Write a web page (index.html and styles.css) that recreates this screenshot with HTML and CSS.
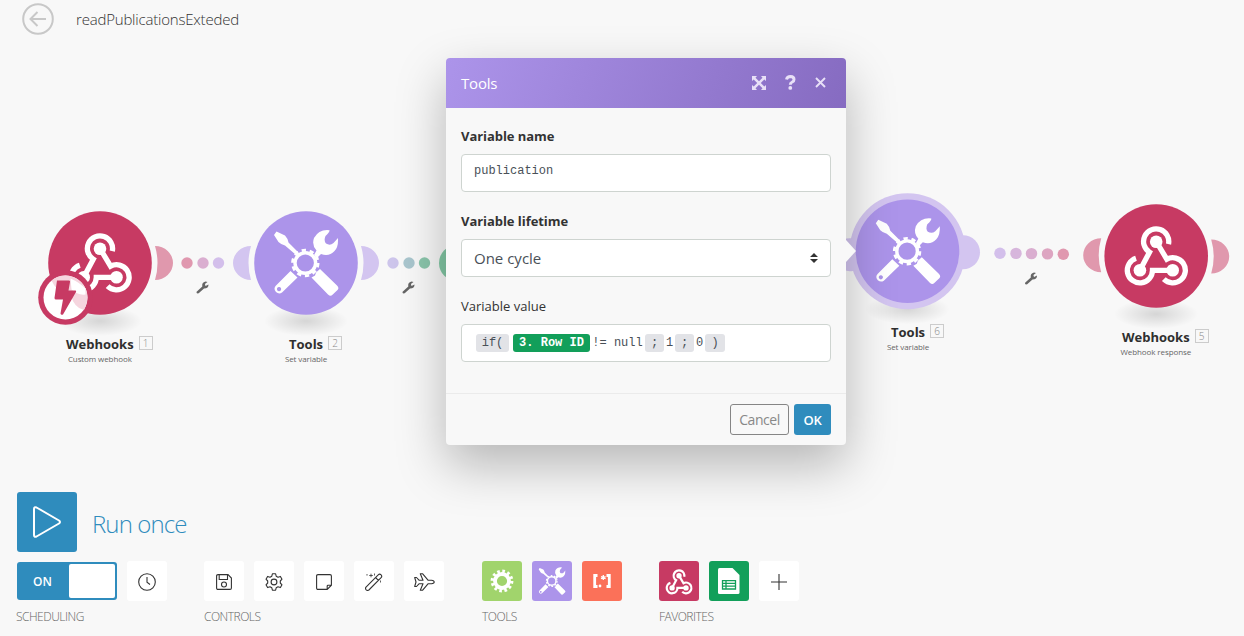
FILE: index.html
```
<!DOCTYPE html>
<html lang="en">
<head>
<meta charset="utf-8">
<title>readPublicationsExteded</title>
<link rel="stylesheet" href="styles.css">
</head>
<body>
<svg class="defs" width="0" height="0">
  <defs>
    <radialGradient id="ground"><stop offset="0" stop-color="#000" stop-opacity=".14"/><stop offset=".5" stop-color="#000" stop-opacity=".07"/><stop offset="1" stop-color="#000" stop-opacity="0"/></radialGradient>
    <g id="webhook">
      <g fill="none" stroke="#fff" stroke-width="5.3">
        <path d="M-16.3 14.3L-6.7-3.8A12.6 12.6 0 1 1 12.3-11.9"/>
        <path d="M0-14.5L10.6 3.2A12.6 12.6 0 1 1 7.6 23.2"/>
        <path d="M16.5 14.3H-3.7A12.6 12.6 0 1 1-20.2 2.3"/>
      </g>
      <g fill="#fff"><circle cy="-14.3" r="6.3"/><circle cx="-16.3" cy="14.3" r="6.3"/><circle cx="16.5" cy="14.3" r="6.3"/></g>
    </g>
    <g id="tools" fill="#fff">
      <path d="M-29.500-31.500L-32-28L-27.500-21Q-25-18.500-21-17.500L-10.500-8.500L-8-11L-17.500-20.500Q-18.500-25-21-27.500Z"/>
      <path d="M8-8L10.500-12.500Q5.500-18 8-25Q13-34 23.500-32.800Q24-31 19.500-27Q17.500-22.500 20-19.500Q24-17 27.500-20L32-25Q32.500-16 28.500-12Q23-6 15-9L11-5Z"/>
      <path d="M-15.500 8L-8.500 14.500L-24 29.500Q-27 31.500-30 29Q-33 25.500-30 22.500ZM-27 24a2.100 2.100 0 1 0 .1 0Z" fill-rule="evenodd"/>
      <path d="M5.500 14.500L9 12.500L10 9.500L14 6L31 22.500Q33.500 25 31.500 27L26.500 31.800Q24.500 34 22 31.500Z"/>
      <g fill="none" stroke="#fff"><circle cx="-.7" r="10.300" stroke-width="3.400"/><circle cx="-.7" r="12.800" stroke-width="2.800" stroke-dasharray="4.300 3.743"/></g>
    </g>
    <path id="spanner" d="M-5.900 4.200L-.2-1Q-1-5 3-6L5-5.600L2.400-3.600L3-1.500L6-3Q6.200 1 1.500 1.100L-3.800 5.800Q-6.600 6.500-5.900 4.200Z" fill="#666"/>
    <path id="moonR" d="M55-17A18 17 0 0 1 55 17Q60 0 55-17"/>
    <path id="moonL" d="M-55-17A18 17 0 0 0-55 17Q-60 0-55-17"/>
  </defs>
</svg>

<header class="topbar">
  <svg class="back" width="32" height="32" viewBox="0 0 32 32" fill="none" stroke="#c8c8c8" stroke-width="2"><circle cx="16" cy="16" r="14.800"/><path d="M24 16H8.500M15.500 9L8.500 16L15.500 23"/></svg>
  <h1 class="scenario">readPublicationsExteded</h1>
</header>

<main class="canvas">
  <svg class="graph" width="1244" height="490" viewBox="0 0 1244 490">
    <circle cx="187" cy="263" r="5.700" fill="#e098af"/><circle cx="203" cy="263" r="5.700" fill="#daaed0"/><circle cx="218.500" cy="263" r="5.700" fill="#d3bfeb"/>
    <circle cx="393" cy="263" r="5.700" fill="#cdc5eb"/><circle cx="409" cy="263" r="5.700" fill="#a9c6ce"/><circle cx="424.500" cy="263" r="5.700" fill="#8bc6ac"/>
    <circle cx="457" cy="263" r="18" fill="#83c8a5"/>
    <circle cx="1000" cy="253.300" r="5.700" fill="#d3bfeb"/><circle cx="1016" cy="253.400" r="5.700" fill="#d7b6dc"/><circle cx="1031.500" cy="253.600" r="5.700" fill="#daaed0"/><circle cx="1047.500" cy="253.900" r="5.700" fill="#dda5c1"/><circle cx="1063.300" cy="254.200" r="5.700" fill="#e098af"/>
    <use href="#spanner" x="202.500" y="287.500"/><use href="#spanner" x="408.500" y="287.500"/><use href="#spanner" x="1031" y="278.500"/>

    <g transform="translate(100 263)">
      <ellipse cy="58" rx="42" ry="15" fill="url(#ground)"/>
      <use href="#moonR" fill="#e098ad"/>
      <circle r="51.800" fill="#c73a63"/><use href="#webhook"/>
      <g transform="translate(-34.500 34.500)">
        <circle r="27.300" fill="#c73a63"/><circle r="22" fill="#fff"/>
        <path d="M-14-17A22 22 0 0 1 20 9L18.500 12.500Q9 11 5-3Q-9-5-14-17Z" fill="#f5d5de"/>
        <path d="M5-19Q14-15 20-9L20-3Q12-2 6-8Z" fill="#fff"/>
        <path d="M-8.500-17H3.500Q5-17 4.500-15.500L3-7H10Q11 -7 10.500-5.500L-2.500 17Q-4.500 18-5 16L-2.500 2H-9.500Q-11 2-11 .5Z" fill="#c73a63"/>
      </g>
    </g>
    <g transform="translate(306 263)">
      <ellipse cy="58" rx="42" ry="15" fill="url(#ground)"/>
      <use href="#moonR" fill="#d3c5f0"/><use href="#moonL" fill="#d3c5f0"/>
      <circle r="51.800" fill="#ac94ea"/><use href="#tools"/>
    </g>
    <g transform="translate(907.500 251.200)">
      <ellipse cy="58" rx="42" ry="15" fill="url(#ground)"/>
      <circle r="58" fill="#d3c5f0"/><rect x="-72" y="-13" width="30" height="33" rx="14" fill="#d3c5f0"/><circle cx="55.500" cy="1" r="17" fill="#d3c5f0"/>
      <circle r="51.800" fill="#ac94ea"/><use href="#tools" x=".3"/>
    </g>
    <g transform="translate(1156.200 256)">
      <ellipse cy="58" rx="42" ry="15" fill="url(#ground)"/>
      <use href="#moonR" fill="#e098ad" y=".5"/><use href="#moonL" fill="#e098ad" y="-.8"/>
      <circle r="51.800" fill="#c73a63"/><use href="#webhook"/>
    </g>
  </svg>
  <div class="label label-1"><span class="name">Webhooks</span><span class="order">1</span><small class="kind">Custom webhook</small></div>
  <div class="label label-2"><span class="name">Tools</span><span class="order">2</span><small class="kind">Set variable</small></div>
  <div class="label label-6"><span class="name">Tools</span><span class="order">6</span><small class="kind">Set variable</small></div>
  <div class="label label-5"><span class="name">Webhooks</span><span class="order">5</span><small class="kind">Webhook response</small></div>
</main>

<section class="dialog">
  <header class="dialog-head">
    <h2 class="dialog-title">Tools</h2>
    <svg width="14" height="14" viewBox="0 0 14 14" fill="#e8e0f7"><path d="M0 0H5L3.500 1.700L7 5.300L10.500 1.700L9 0H14V5L12.300 3.500L8.800 7L12.300 10.500L14 9V14H9L10.500 12.300L7 8.700L3.500 12.300L5 14H0V9L1.700 10.500L5.200 7L1.700 3.500L0 5Z"/></svg>
    <svg class="help" width="11" height="15" viewBox="0 0 11 15" fill="none"><path d="M1.500 4.500Q2.200 1.500 5.500 1.500Q9 1.600 9 4.400Q9 6 7.200 7Q5.300 7.900 5.300 9.700" stroke="#e8e0f7" stroke-width="3"/><circle cx="5.300" cy="12.900" r="1.900" fill="#e8e0f7"/></svg>
    <svg class="close" width="11" height="11" viewBox="0 0 11 11" stroke="#e8e0f7" stroke-width="1.900"><path d="M1 1L10 10M10 1L1 10"/></svg>
  </header>
  <div class="form">
    <label class="field-label">Variable name</label>
    <div class="field mono">publication</div>
    <label class="field-label">Variable lifetime</label>
    <div class="field select"><span>One cycle</span><svg width="8" height="10" viewBox="0 0 8 10" fill="#333"><path d="M0 4L4 0L8 4ZM0 6L4 10L8 6Z"/></svg></div>
    <label class="field-label light">Variable value</label>
    <div class="field mono formula"><span class="chip fn">if(</span><span class="chip row">3. Row ID</span><span class="lit cond">!= null</span><span class="chip sep">;</span><span class="lit">1</span><span class="chip sep">;</span><span class="lit">0</span><span class="chip end">)</span></div>
  </div>
  <footer class="dialog-foot"><button class="btn cancel">Cancel</button><button class="btn ok">OK</button></footer>
</section>
<i class="pointer"></i>

<footer class="bottom">
  <div class="run">
    <span class="play"><svg width="28" height="32" viewBox="0 0 28 32" fill="none" stroke="#fff" stroke-width="2" stroke-linejoin="round"><path d="M1 3Q1 .5 3.500 1.500L26 14.500Q28 16 26 17.500L3.500 30.500Q1 31.500 1 29Z"/></svg></span>
    <span class="run-text">Run once</span>
  </div>
  <div class="groups">
    <div class="group scheduling">
      <div class="items">
        <span class="toggle"><b class="on">ON</b><i class="knob"></i></span>
        <span class="tile line"><svg width="18" height="18" viewBox="0 0 18 18"><circle cx="9" cy="9" r="8.300"/><path d="M9 4V9.300L12 11.500"/></svg></span>
      </div>
      <span class="caption">SCHEDULING</span>
    </div>
    <div class="group controls">
      <div class="items">
        <span class="tile line"><svg width="16" height="16" viewBox="0 0 16 16"><path d="M2 .6H12L15.400 4V14Q15.400 15.400 14 15.400H2Q.6 15.400 .6 14V2Q.6 .6 2 .6ZM3.200 .6V5.500H11.500V.6"/><circle cx="8" cy="10.500" r="2.500"/></svg></span>
        <span class="tile line"><svg width="18" height="18" viewBox="0 0 18 18"><circle cx="9" cy="9" r="2.900"/><path d="M7.400 .8H10.600L11.200 3.200L13 4.200L15.400 3.400L17 6.200L15.300 8V10L17 11.800L15.400 14.600L13 13.800L11.200 14.800L10.600 17.200H7.400L6.800 14.800L5 13.800L2.600 14.600L1 11.800L2.700 10V8L1 6.200L2.600 3.400L5 4.200L6.800 3.200Z" stroke-linejoin="round"/></svg></span>
        <span class="tile line"><svg width="16" height="16" viewBox="0 0 16 16"><path d="M2 .6H14Q15.400 .6 15.400 2V11.200L11.200 15.400H2Q.6 15.400 .6 14V2Q.6 .6 2 .6ZM15.400 11.200H12Q11.200 11.200 11.200 12V15.400"/></svg></span>
        <span class="tile line"><svg width="18" height="18" viewBox="0 0 18 18"><path d="M1 14.200L13.200 1.800Q14.600 .5 16.100 1.800Q17.400 3.300 16.100 4.700L3.900 17Q2.500 18 1.200 16.800Q0 15.500 1 14.200ZM10.500 4.500L13.400 7.400"/><path d="M6 .7V4.300M4.200 2.500H7.800M9.500 .5V2.500M2 1V2.600M15.500 7.500V9.500" stroke-width=".8"/></svg></span>
        <span class="tile line"><svg width="21" height="18" viewBox="0 0 21 18"><path d="M.7 4.500H2.500L5 7.200H9L6.300 .8H8.700L14 7.200H17.500Q20.200 7.500 20.200 9Q20.200 10.500 17.500 10.800H14L8.700 17.200H6.300L9 10.800H5L2.500 13.500H.7L2 9Z" stroke-linejoin="round"/></svg></span>
      </div>
      <span class="caption">CONTROLS</span>
    </div>
    <div class="group">
      <div class="items">
        <span class="tile green"><svg width="24" height="24" viewBox="-12 -12 24 24"><circle r="7" stroke="#fff" stroke-width="3.800"/><circle r="9.700" stroke="#fff" stroke-width="3.400" stroke-dasharray="2.600 2.479"/></svg></span>
        <span class="tile violet"><svg width="30" height="30" viewBox="-36 -36 72 72" class="solid"><use href="#tools"/></svg></span>
        <span class="tile coral"><svg width="20" height="16" viewBox="0 0 20 16"><path d="M5.500 2.500H2.700V13.500H5.500M14.500 2.500H17.300V13.500H14.500" stroke="#fff" stroke-width="2.800"/><path d="M11.300 2V7M9 3.600L13.600 5.600M13.600 3.600L9 5.600" stroke="#fff" stroke-width="1.300"/><circle cx="8" cy="13" r="1.400" fill="#fff" stroke="none"/></svg></span>
      </div>
      <span class="caption">TOOLS</span>
    </div>
    <div class="group favorites">
      <div class="items">
        <span class="tile red"><svg width="28" height="28" viewBox="-33 -33 66 66" class="solid"><use href="#webhook" y="2"/></svg></span>
        <span class="tile sheet"><svg width="22" height="26" viewBox="0 0 22 26"><path d="M1.500 0H14.500L21.500 7V24.500Q21.500 26 20 26H1.500Q0 26 0 24.500V1.500Q0 0 1.500 0Z" fill="#fff" stroke="none"/><path d="M4.500 12.700H17.500V21H4.500ZM4.500 15.400H17.500M4.500 18.200H17.500M8 12.500V21" stroke="#129f5a" stroke-width="1.300"/></svg></span>
        <span class="tile line"><svg width="16" height="16" viewBox="0 0 16 16"><path d="M8 0V16M0 8H16"/></svg></span>
      </div>
      <span class="caption">FAVORITES</span>
    </div>
  </div>
</footer>
</body>
</html>
```
FILE: styles.css
```
* { box-sizing: border-box; }
body { margin: 0; width: 1244px; height: 636px; overflow: hidden; position: relative; background: #f8f8f8; color: #333; font-family: "Open Sans", "Noto Sans", sans-serif; display: flex; flex-direction: column; justify-content: space-between; }
.defs { position: absolute; }
.topbar { display: flex; align-items: center; gap: 22px; height: 40px; padding: 0 0 2px 22px; position: relative; z-index: 1; }
.scenario { margin: 0; font-size: 15px; font-weight: 300; letter-spacing: -.2px; line-height: 20px; color: #333; }

.canvas { position: absolute; inset: 0; }
.graph { display: block; }
.label { position: absolute; display: grid; grid-template-columns: auto 14px; column-gap: 5px; row-gap: 0; }
.label-1 { left: 66px; top: 335px; }
.label-2 { left: 289px; top: 335px; }
.label-6 { left: 891px; top: 323px; }
.label-5 { left: 1122px; top: 328px; }
.name { font-size: 13px; font-weight: 700; line-height: 18px; letter-spacing: 0; color: #2f2f2f; white-space: nowrap; }
.order { margin-top: 1px; height: 14px; border: 1px solid #ccc; font-size: 10px; line-height: 12px; text-align: center; color: #888; font-weight: 300; }
.kind { grid-column: 1; justify-self: center; font-size: 8px; line-height: 11px; letter-spacing: -.1px; color: #666; white-space: nowrap; width: max-content; margin: 0 -10px; }

.dialog { position: absolute; left: 446px; top: 58px; width: 400px; height: 387px; border-radius: 4px; background: #f8f8f8; box-shadow: 0 20px 50px rgba(0,0,0,.27); display: flex; flex-direction: column; }
.dialog-head { height: 50px; padding: 0 20px 1px 15px; display: flex; align-items: center; border-radius: 4px 4px 0 0; background: linear-gradient(110deg, #ac94ea, #866bc1); }
.dialog-title { margin: 0 auto 0 0; font-size: 15px; font-weight: 400; letter-spacing: -.2px; color: #fff; }
.help { margin-left: 19px; }
.close { margin-left: 19px; }
.form { flex: 1; padding: 18px 15px 0; display: flex; flex-direction: column; }
.field-label { font-size: 13px; line-height: 20px; font-weight: 700; margin-bottom: 8px; letter-spacing: -.05px; }
.field-label.light { font-weight: 400; letter-spacing: 0; }
.field { height: 38px; margin-bottom: 19px; border: 1px solid #ced4d0; border-radius: 4px; background: #fff; display: flex; align-items: center; padding: 0 12px; color: #495057; flex: none; }
.mono { font-family: "Liberation Mono", monospace; font-size: 12px; padding-bottom: 5px; }
.select { justify-content: space-between; font-size: 15px; }
.mono.formula { padding: 0 0 0 14px; }
.chip { background: #e2e3e7; border-radius: 3px; height: 18px; line-height: 18px; text-align: center; flex: none; }
.fn { width: 33px; margin-right: 4px; }
.row { width: 77px; background: #129f5a; color: #fff; font-weight: 700; }
.lit { width: 11px; text-align: center; white-space: nowrap; }
.cond { width: 55px; }
.sep { width: 19px; }
.end { width: 20px; }
.dialog-foot { height: 52px; border-top: 1px solid #ebebeb; display: flex; justify-content: flex-end; gap: 5px; padding: 10px 15px; }
.btn { height: 31px; padding: 0; border-radius: 3px; font: 400 14px "Open Sans", sans-serif; }
.cancel { width: 59px; border: 1px solid #858585; background: transparent; color: #888; letter-spacing: -.45px; }
.ok { width: 37px; border: 0; background: #2f8cbd; color: #fff; font-weight: 600; font-size: 13px; letter-spacing: -.2px; }
.pointer { position: absolute; left: 846px; top: 240px; width: 10px; height: 22px; background: #f8f8f8; clip-path: polygon(0 0, 100% 50%, 0 100%); }

.bottom { position: relative; padding: 0 17px 9px; }
.run { display: flex; align-items: center; gap: 15px; height: 60px; margin-bottom: 9px; }
.play { width: 60px; height: 60px; background: #2f8cbd; border-radius: 3px; display: grid; place-items: center; }
.run-text { color: #2f8cbd; font-size: 24px; font-weight: 300; letter-spacing: -.9px; padding-top: 3px; }
.groups { display: flex; gap: 37px; }
.group { display: flex; flex-direction: column; gap: 6px; }
.controls { margin-right: 1px; }
.items { display: flex; align-items: center; gap: 10px; }
.toggle { width: 100px; height: 38px; border-radius: 3px; background: #2f8cbd; padding: 2px; display: flex; justify-content: space-between; align-items: center; }
.on { flex: 1; text-align: center; color: #fff; font-size: 12px; font-weight: 600; padding-right: 3px; }
.knob { width: 46px; height: 34px; border-radius: 2px; background: #fff; }
.tile { width: 40px; height: 40px; border-radius: 3px; background: #fff; display: grid; place-items: center; }
.line { padding-top: 2px; }
.tile svg { fill: none; stroke: #333; stroke-width: 1.1; }
.tile svg.solid { stroke: none; }
.green { background: #a1d46c; }
.violet { background: #ac94ea; }
.coral { background: #fb7159; }
.red { background: #c73a63; }
.sheet { background: #129f5a; }
.caption { font-size: 12px; line-height: 20px; font-weight: 300; letter-spacing: -.5px; color: #666; }
.scheduling .caption { margin-left: -1px; }
```
